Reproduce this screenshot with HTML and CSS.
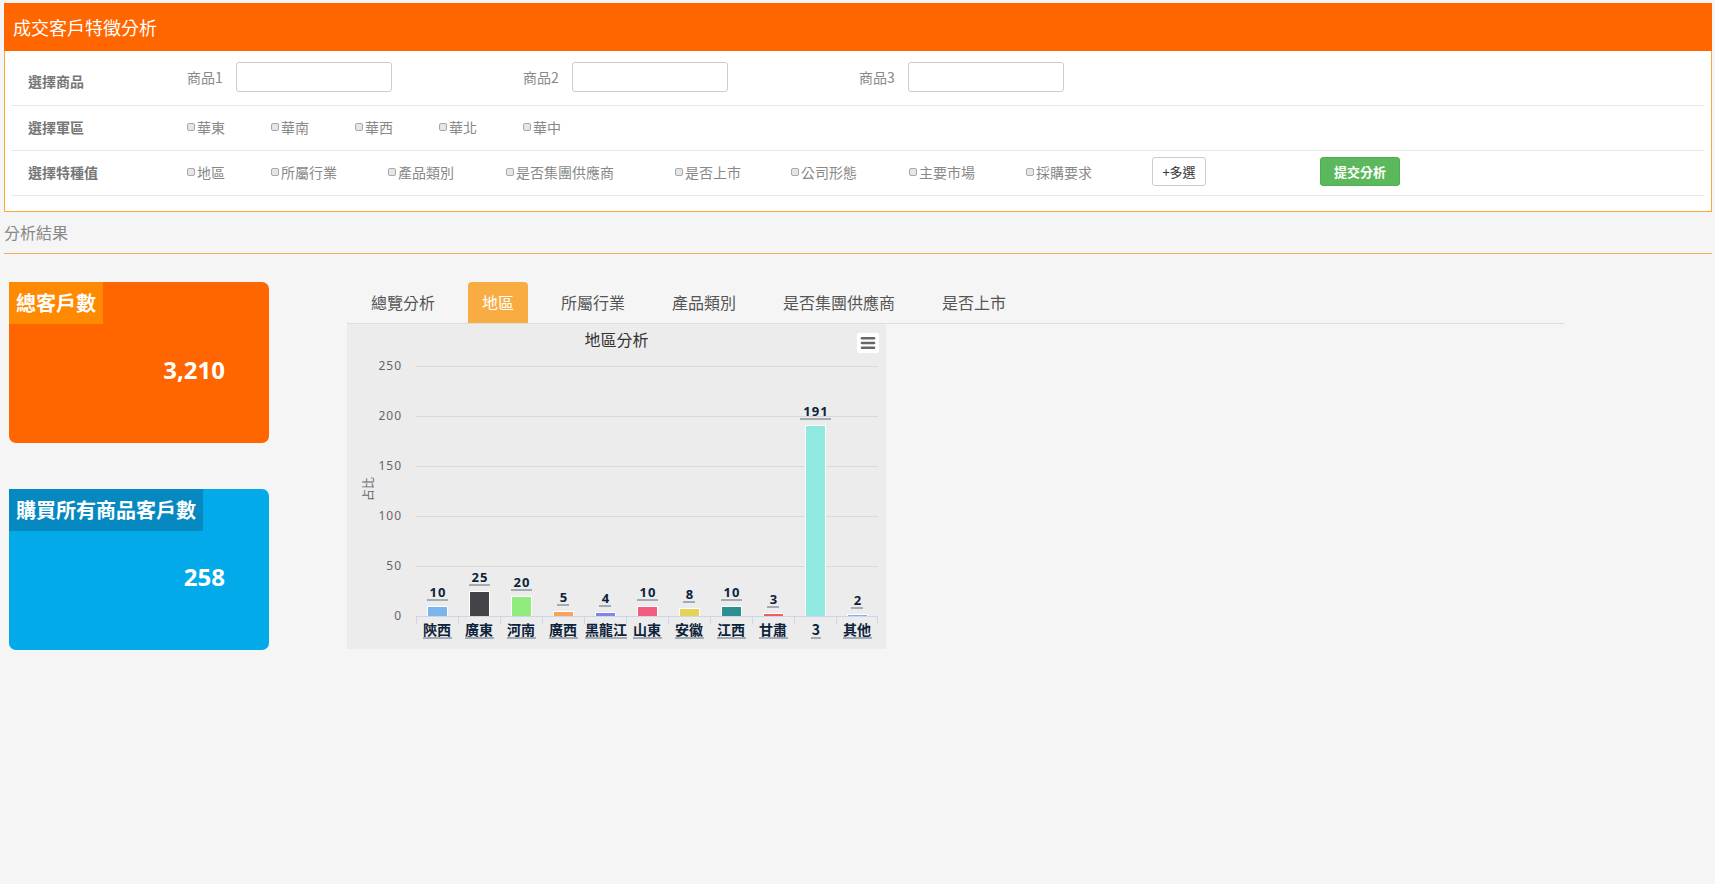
FILE: index.html
```
<!DOCTYPE html>
<html lang="zh-Hant">
<head>
<meta charset="utf-8">
<title>成交客戶特徵分析</title>
<link rel="stylesheet" href="styles.css">
</head>
<body>
<div class="panel">
  <div class="panel-head">成交客戶特徵分析</div>
  <div class="panel-body">
    <div class="row row-1">
      <div class="row-label">選擇商品</div>
      <div class="prod"><span>商品1</span><span class="input"></span></div>
      <div class="prod"><span>商品2</span><span class="input"></span></div>
      <div class="prod"><span>商品3</span><span class="input"></span></div>
    </div>
    <div class="row row-2">
      <div class="row-label">選擇軍區</div>
      <label class="opt w84"><span class="cb"></span>華東</label>
      <label class="opt w84"><span class="cb"></span>華南</label>
      <label class="opt w84"><span class="cb"></span>華西</label>
      <label class="opt w84"><span class="cb"></span>華北</label>
      <label class="opt w84"><span class="cb"></span>華中</label>
    </div>
    <div class="row row-3">
      <div class="row-label">選擇特種值</div>
      <label class="opt w84"><span class="cb"></span>地區</label>
      <label class="opt w117"><span class="cb"></span>所屬行業</label>
      <label class="opt w118"><span class="cb"></span>產品類別</label>
      <label class="opt w169"><span class="cb"></span>是否集團供應商</label>
      <label class="opt w116"><span class="cb"></span>是否上市</label>
      <label class="opt w118"><span class="cb"></span>公司形態</label>
      <label class="opt w117"><span class="cb"></span>主要市場</label>
      <label class="opt w126"><span class="cb"></span>採購要求</label>
      <button class="btn btn-more">+多選</button>
      <button class="btn btn-submit">提交分析</button>
    </div>
  </div>
</div>

<div class="section-title">分析結果</div>

<div class="main">
  <div class="cards">
    <div class="card card-orange">
      <div class="card-title">總客戶數</div>
      <div class="card-num">3,210</div>
    </div>
    <div class="card card-blue">
      <div class="card-title">購買所有商品客戶數</div>
      <div class="card-num">258</div>
    </div>
  </div>

  <div class="analysis">
    <div class="tabs">
      <div class="tab">總覽分析</div>
      <div class="tab active">地區</div>
      <div class="tab">所屬行業</div>
      <div class="tab">產品類別</div>
      <div class="tab">是否集團供應商</div>
      <div class="tab">是否上市</div>
    </div>
    <div class="chart">
      <svg width="539" height="325" viewBox="0 0 539 325" xmlns="http://www.w3.org/2000/svg">
        <text class="c-title" x="269.5" y="22" text-anchor="middle">地區分析</text>
        <rect x="510" y="9" width="22" height="20" rx="2" fill="#ffffff"/>
        <g stroke="#666" stroke-width="2.6" stroke-linecap="round">
          <line x1="515" y1="14.3" x2="527" y2="14.3"/>
          <line x1="515" y1="19" x2="527" y2="19"/>
          <line x1="515" y1="23.7" x2="527" y2="23.7"/>
        </g>
        <g stroke="#d9d9d9" stroke-width="1">
          <line x1="69" y1="42.5" x2="531" y2="42.5"/>
          <line x1="69" y1="92.5" x2="531" y2="92.5"/>
          <line x1="69" y1="142.5" x2="531" y2="142.5"/>
          <line x1="69" y1="192.5" x2="531" y2="192.5"/>
          <line x1="69" y1="242.5" x2="531" y2="242.5"/>
        </g>
        <g class="y-lab" text-anchor="end">
          <text x="55" y="46">250</text>
          <text x="55" y="96">200</text>
          <text x="55" y="146">150</text>
          <text x="55" y="196">100</text>
          <text x="55" y="246">50</text>
          <text x="55" y="296">0</text>
        </g>
        <text class="y-title" transform="translate(26,165) rotate(-90)" text-anchor="middle">占比</text>
        <g stroke="#ffffff" stroke-width="1">
          <rect x="80.5" y="282.5" width="20" height="10" fill="#7cb5ec"/>
          <rect x="122.5" y="267.5" width="20" height="25" fill="#434348"/>
          <rect x="164.5" y="272.5" width="20" height="20" fill="#90ed7d"/>
          <rect x="206.5" y="287.5" width="20" height="5" fill="#f7a35c"/>
          <rect x="248.5" y="288.5" width="20" height="4" fill="#8085e9"/>
          <rect x="290.5" y="282.5" width="20" height="10" fill="#f15c80"/>
          <rect x="332.5" y="284.5" width="20" height="8" fill="#e4d354"/>
          <rect x="374.5" y="282.5" width="20" height="10" fill="#2b908f"/>
          <rect x="416.5" y="289.5" width="20" height="3" fill="#f45b5b"/>
          <rect x="458.5" y="101.5" width="20" height="191" fill="#91e8e1"/>
          <rect x="500.5" y="290.5" width="20" height="2" fill="#7cb5ec"/>
        </g>
        <line x1="69" y1="292.5" x2="531" y2="292.5" stroke="#ccd6eb" stroke-width="1"/>
        <g stroke="#ccd6eb" stroke-width="1">
          <line x1="69.5" y1="292" x2="69.5" y2="300"/>
          <line x1="111.5" y1="292" x2="111.5" y2="300"/>
          <line x1="153.5" y1="292" x2="153.5" y2="300"/>
          <line x1="195.5" y1="292" x2="195.5" y2="300"/>
          <line x1="237.5" y1="292" x2="237.5" y2="300"/>
          <line x1="279.5" y1="292" x2="279.5" y2="300"/>
          <line x1="321.5" y1="292" x2="321.5" y2="300"/>
          <line x1="363.5" y1="292" x2="363.5" y2="300"/>
          <line x1="405.5" y1="292" x2="405.5" y2="300"/>
          <line x1="447.5" y1="292" x2="447.5" y2="300"/>
          <line x1="489.5" y1="292" x2="489.5" y2="300"/>
          <line x1="530.5" y1="292" x2="530.5" y2="300"/>
        </g>
        <g fill="#a5abb3">
          <rect x="80" y="275" width="21" height="2"/>
          <rect x="122" y="260" width="21" height="2"/>
          <rect x="164" y="265" width="21" height="2"/>
          <rect x="210" y="280" width="12" height="2"/>
          <rect x="252" y="281" width="12" height="2"/>
          <rect x="290" y="275" width="21" height="2"/>
          <rect x="336" y="277" width="12" height="2"/>
          <rect x="374" y="275" width="21" height="2"/>
          <rect x="420" y="282" width="12" height="2"/>
          <rect x="453" y="94" width="31" height="2"/>
          <rect x="504" y="283" width="12" height="2"/>
        </g>
        <g class="d-lab" text-anchor="middle">
          <text x="91" y="273">10</text>
          <text x="133" y="258">25</text>
          <text x="175" y="263">20</text>
          <text x="217" y="278">5</text>
          <text x="259" y="279">4</text>
          <text x="301" y="273">10</text>
          <text x="343" y="275">8</text>
          <text x="385" y="273">10</text>
          <text x="427" y="280">3</text>
          <text x="469" y="92">191</text>
          <text x="511" y="281">2</text>
        </g>
        <g fill="#a5abb3">
          <rect x="76" y="313" width="29" height="2"/>
          <rect x="118" y="313" width="29" height="2"/>
          <rect x="160" y="313" width="29" height="2"/>
          <rect x="202" y="313" width="29" height="2"/>
          <rect x="238" y="313" width="42" height="2"/>
          <rect x="286" y="313" width="29" height="2"/>
          <rect x="328" y="313" width="29" height="2"/>
          <rect x="370" y="313" width="29" height="2"/>
          <rect x="412" y="313" width="29" height="2"/>
          <rect x="464" y="313" width="10" height="2"/>
          <rect x="496" y="313" width="29" height="2"/>
        </g>
        <g class="x-lab" text-anchor="middle">
          <text x="90" y="311">陝西</text>
          <text x="132" y="311">廣東</text>
          <text x="174" y="311">河南</text>
          <text x="216" y="311">廣西</text>
          <text x="259" y="311">黑龍江</text>
          <text x="300" y="311">山東</text>
          <text x="342" y="311">安徽</text>
          <text x="384" y="311">江西</text>
          <text x="426" y="311">甘肅</text>
          <text x="469" y="311">3</text>
          <text x="510" y="311">其他</text>
        </g>
      </svg>
    </div>
  </div>
</div>
</body>
</html>
```

FILE: styles.css
```
* { box-sizing: border-box; }

body {
  margin: 0;
  background: #f5f5f5;
  font-family: "Noto Sans CJK TC", "Noto Sans", sans-serif;
  color: #333;
}

.panel {
  margin: 3px 3px 0 4px;
}

.panel-head {
  height: 48px;
  background: #ff6600;
  color: #fff;
  font-size: 18px;
  line-height: 48px;
  padding-left: 9px;
}

.panel-body {
  background: #fff;
  border: 1px solid #f7a839;
  border-top: none;
  padding: 0 6px 15px;
}

.row {
  display: flex;
  align-items: center;
  border-bottom: 1px solid #e9e9e9;
  padding-left: 17px;
}

.row-1 { height: 55px; }
.row-2, .row-3 { height: 45px; padding-bottom: 3px; }

.row-label {
  flex: none;
  width: 159px;
  font-size: 14px;
  font-weight: bold;
  color: #777;
}

.row-1 .row-label { padding-top: 6px; }

.prod {
  flex: none;
  width: 336px;
  display: flex;
  align-items: center;
  padding-bottom: 3px;
  font-size: 14px;
  color: #888;
}

.input {
  display: block;
  width: 156px;
  height: 30px;
  margin-left: 13px;
  border: 1px solid #ccc;
  border-radius: 3px;
  background: #fff;
}

.opt {
  flex: none;
  display: flex;
  align-items: center;
  font-size: 14px;
  color: #888;
}

.cb {
  width: 8px;
  height: 8px;
  margin-right: 2px;
  border: 1px solid #a8a8a8;
  border-radius: 2px;
  background: #e6e6e6;
}

.w84 { width: 84px; }
.w116 { width: 116px; }
.w117 { width: 117px; }
.w118 { width: 118px; }
.w126 { width: 126px; }
.w169 { width: 169px; }

.btn {
  flex: none;
  height: 29px;
  border-radius: 3px;
  font-family: inherit;
  font-size: 13px;
  padding: 0;
}

.btn-more {
  width: 54px;
  background: #fff;
  border: 1px solid #ccc;
  color: #333;
}

.btn-submit {
  width: 80px;
  margin-left: 114px;
  background: #5cb85c;
  border: 1px solid #4cae4c;
  color: #fff;
  font-weight: bold;
}

.section-title {
  margin: 0 3px 0 4px;
  height: 42px;
  line-height: 41px;
  font-size: 16px;
  color: #888;
  border-bottom: 1px solid #f2b05a;
}

.main {
  display: flex;
  align-items: flex-start;
  margin-top: 28px;
  padding-left: 9px;
}

.cards {
  flex: none;
  width: 260px;
  display: flex;
  flex-direction: column;
  gap: 46px;
}

.card {
  height: 161px;
  border-radius: 0 7px 7px 7px;
  overflow: hidden;
}

.card-title {
  display: inline-block;
  height: 42px;
  line-height: 42px;
  padding: 0 7px;
  font-size: 20px;
  font-weight: bold;
  color: #fff;
}

.card-orange { background: #ff6600; }
.card-orange .card-title { background: #ff8900; }
.card-blue { background: #02aae9; }
.card-blue .card-title { background: #0689c0; }

.card-num {
  margin-top: 32px;
  padding-right: 44px;
  text-align: right;
  font-family: "Open Sans", "Noto Sans", sans-serif;
  font-size: 24px;
  line-height: 28px;
  font-weight: bold;
  color: #fff;
}

.analysis {
  flex: none;
  width: 1217px;
  margin-left: 78px;
}

.tabs {
  display: flex;
  height: 42px;
  border-bottom: 1px solid #ddd;
}

.tab {
  margin: 0 9.5px;
  padding: 0 14px;
  height: 41px;
  line-height: 41px;
  font-size: 16px;
  color: #555;
}

.tab:first-child { margin-left: 10px; }

.tab.active {
  background: #f8ac42;
  color: #fff;
  border-radius: 4px 4px 0 0;
}

.chart {
  width: 539px;
  height: 325px;
  background: #ececec;
}

.chart svg {
  display: block;
  font-family: "Noto Sans CJK TC", "Noto Sans", sans-serif;
}

.c-title {
  font-size: 16px;
  fill: #333;
}

.y-lab text {
  font-size: 12px;
  fill: #666;
  letter-spacing: 1px;
  font-family: "Noto Sans", sans-serif;
}

.y-title {
  font-size: 12px;
  fill: #666;
}

.d-lab text {
  font-size: 13px;
  font-weight: bold;
  fill: #0d233a;
  letter-spacing: 1px;
  font-family: "Noto Sans", sans-serif;
}

.x-lab text {
  font-size: 14px;
  font-weight: bold;
  fill: #0d233a;
}
```
